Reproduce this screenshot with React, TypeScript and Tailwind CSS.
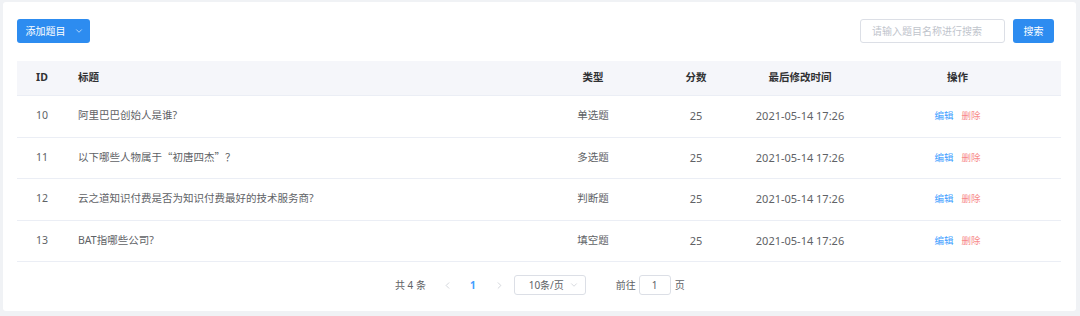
import { ChevronDown, ChevronLeft, ChevronRight } from 'lucide-react';

const cjk = '"Noto Sans CJK SC", sans-serif';

const rows = [
  { id: 10, title: <>阿里巴巴创始人是谁?</>, type: '单选题' },
  {
    id: 11,
    title: (
      <>
        以下哪些人物属于<span style={{ fontFamily: cjk }}>“初唐四杰”？</span>
      </>
    ),
    type: '多选题',
  },
  { id: 12, title: <>云之道知识付费是否为知识付费最好的技术服务商?</>, type: '判断题' },
  { id: 13, title: <>BAT指哪些公司?</>, type: '填空题' },
];

const cols = 'grid grid-cols-[50px_473px_106px_100px_108px_207px]';

export default function App() {
  return (
    <div
      className="h-[316px] w-[1080px] bg-[#f0f2f5] pt-[2px] pl-[3px] pr-[4px] pb-[5px]"
      style={{ fontFamily: '"Noto Sans", "Noto Sans CJK SC", sans-serif' }}
    >
      <div className="h-[309px] rounded-[3px] bg-white px-[14px] pt-[17px]">
        {/* Toolbar */}
        <div className="flex items-center justify-between">
          <button className="flex h-[24px] w-[73px] items-center justify-center gap-[8px] rounded-[3px] bg-[#2d8cf0] pl-[2px] text-[10px] text-white">
            添加题目
            <ChevronDown className="h-[10px] w-[10px]" strokeWidth={1.5} />
          </button>
          <div className="mr-[8px] flex items-center gap-[8px]">
            <div className="flex h-[24px] w-[145px] items-center rounded-[3px] border border-[#dcdfe6] px-[11px] text-[10px] text-[#c0c4cc]">
              请输入题目名称进行搜索
            </div>
            <button className="h-[24px] w-[41px] rounded-[3px] bg-[#2d8cf0] text-[10px] text-white">
              搜索
            </button>
          </div>
        </div>

        {/* Table */}
        <div className="mt-[18px] w-[1044px]">
          <div className={`${cols} h-[35px] items-center border-b border-[#ebeef5] bg-[#f5f6fa] text-[10.5px] font-bold text-[#303133]`}>
            <div className="text-center">ID</div>
            <div className="pl-[11px]">标题</div>
            <div className="text-center">类型</div>
            <div className="text-center">分数</div>
            <div className="text-center">最后修改时间</div>
            <div className="text-center">操作</div>
          </div>
          {rows.map((r) => (
            <div
              key={r.id}
              className={`${cols} h-[41.5px] items-center border-b border-[#ebeef5] text-[10.5px] text-[#606266]`}
            >
              <div className="text-center">{r.id}</div>
              <div className="pl-[11px]">{r.title}</div>
              <div className="text-center">{r.type}</div>
              <div className="text-center text-[11px]">25</div>
              <div className="text-center text-[11px]">2021-05-14 17:26</div>
              <div className="flex justify-center gap-[8px] text-[9.5px]">
                <span className="text-[#409eff]">编辑</span>
                <span className="text-[#f78989]">删除</span>
              </div>
            </div>
          ))}
        </div>

        {/* Pagination */}
        <div className="mt-[13px] flex items-center pl-[378px] text-[10px] text-[#606266]">
          <span>共 4 条</span>
          <ChevronLeft className="ml-[16px] h-[11px] w-[11px] text-[#c0c4cc]" strokeWidth={1.5} />
          <span className="ml-[17px] font-bold text-[#409eff]">1</span>
          <ChevronRight className="ml-[18px] h-[11px] w-[11px] text-[#c0c4cc]" strokeWidth={1.5} />
          <div className="ml-[9px] flex h-[20px] w-[72px] items-center justify-between rounded-[3px] border border-[#dcdfe6] pl-[14px] pr-[6px]">
            <span>10条/页</span>
            <ChevronDown className="h-[10px] w-[10px] text-[#c0c4cc]" strokeWidth={1.5} />
          </div>
          <span className="ml-[30px]">前往</span>
          <div className="ml-[3px] flex h-[20px] w-[32px] items-center justify-center rounded-[3px] border border-[#dcdfe6]">
            1
          </div>
          <span className="ml-[4px]">页</span>
        </div>
      </div>
    </div>
  );
}
